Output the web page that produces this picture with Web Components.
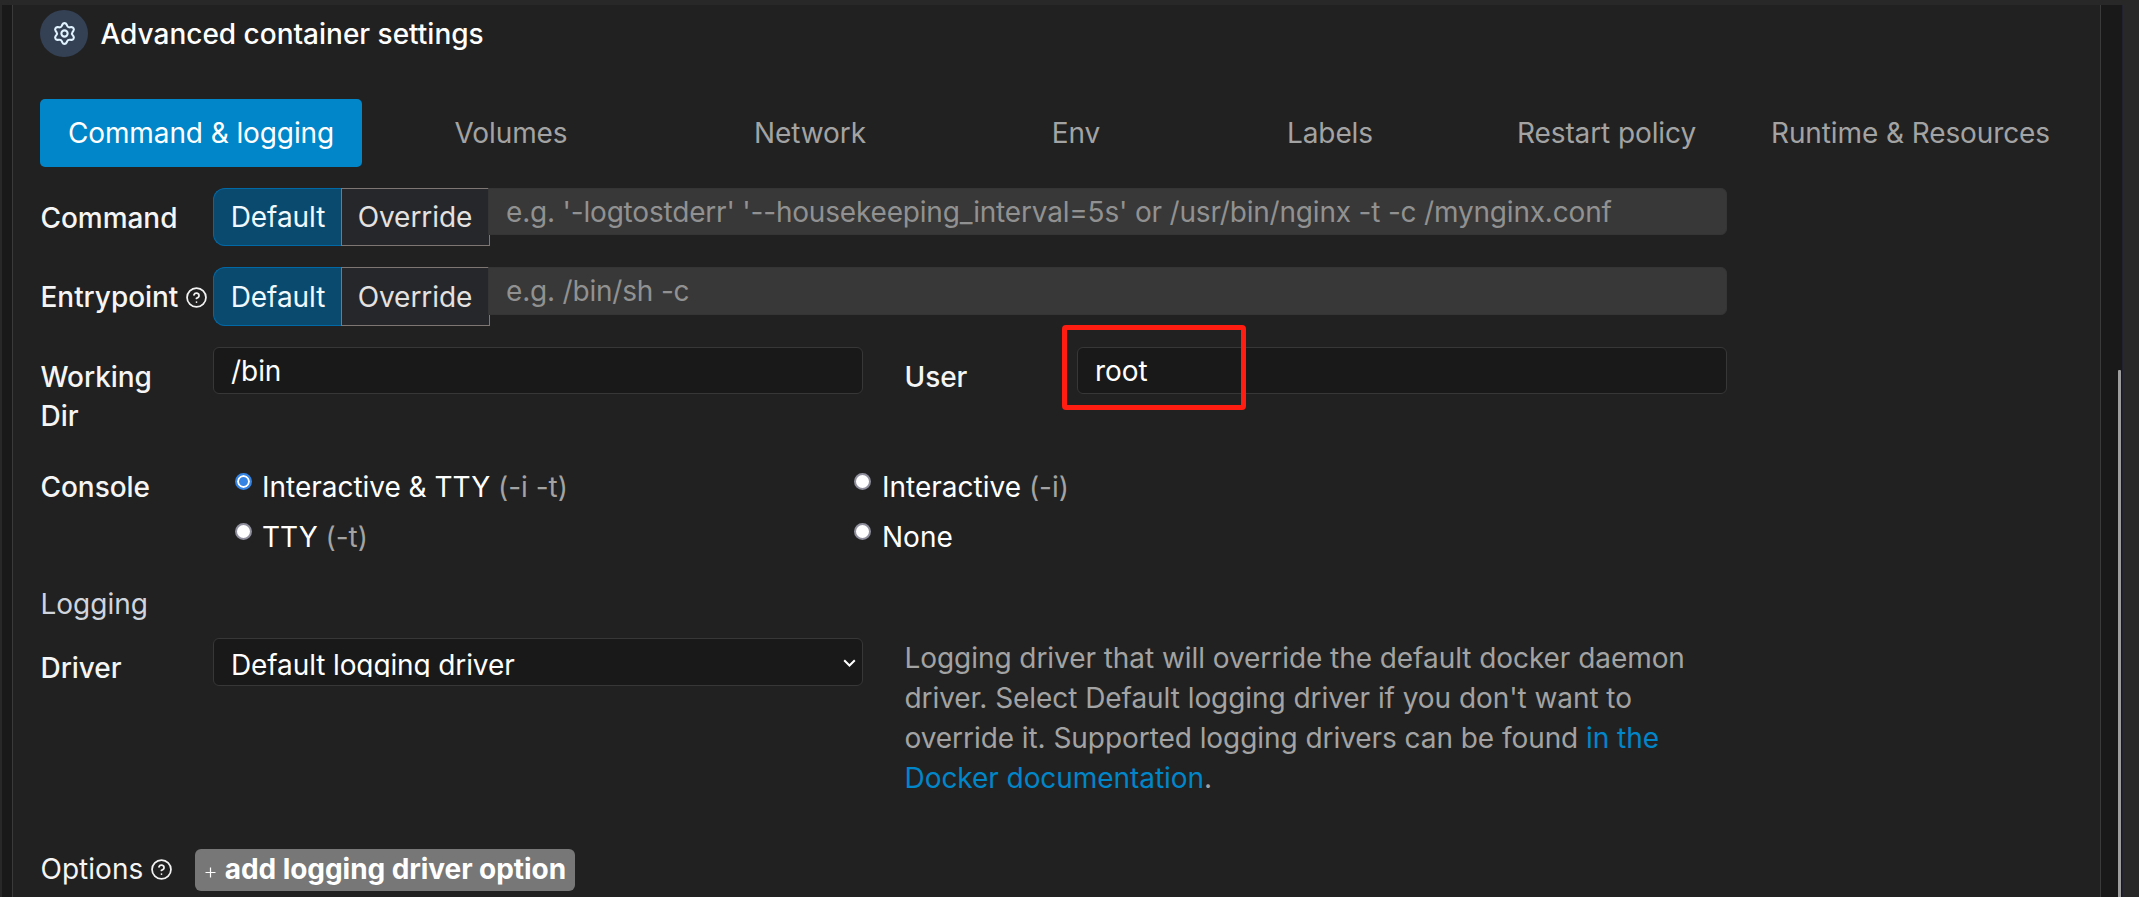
<!DOCTYPE html>
<html lang="en"><head><meta charset="utf-8"><title>Advanced container settings</title>
<style>
html,body{margin:0;height:100%;background:#282828;overflow:hidden}
body{font:400 28px/40px Inter,"Liberation Sans",sans-serif;color:#fff;letter-spacing:-.05px}
</style></head><body>
<settings-page></settings-page>
<script>
const define=(name,css,html)=>customElements.define(name,class extends HTMLElement{
  constructor(){super();this.attachShadow({mode:'open'}).innerHTML=`<style>*{box-sizing:border-box}${css}</style>${typeof html==='function'?html(this):html}`;}
});

define('help-icon',':host{display:block;width:21px;height:21px;flex:none}svg{display:block}',
`<svg width="21" height="21" viewBox="0 0 24 24" fill="none" stroke="#f2f2f2" stroke-width="2" stroke-linecap="round" stroke-linejoin="round"><circle cx="12" cy="12" r="10.8"/><path d="M9.1 9a3 3 0 0 1 5.8 1c0 2-3 3-3 3M12 17.2h.01"/></svg>`);

define('section-title',`:host{display:flex;align-items:flex-start;height:48px;gap:12.5px;font-weight:500;letter-spacing:-.01px}
.c{width:48px;height:47px;border-radius:50%;background:#344054;display:flex;align-items:center;justify-content:center}span{padding-top:4px}`,
`<div class="c"><svg width="25" height="25" viewBox="0 0 24 24" fill="none" stroke="#e0f2fe" stroke-width="2" stroke-linecap="round" stroke-linejoin="round"><circle cx="12" cy="12" r="3"/><path d="M9.395 19.371l.584 1.315a2.213 2.213 0 0 0 4.044 0l.584-1.315a2.426 2.426 0 0 1 2.47-1.423l1.431.152a2.212 2.212 0 0 0 2.022-3.502l-.847-1.164a2.43 2.43 0 0 1 0-2.857l.847-1.164a2.212 2.212 0 0 0-2.022-3.503l-1.431.153a2.43 2.43 0 0 1-2.47-1.43l-.588-1.314a2.213 2.213 0 0 0-4.044 0l-.58 1.315a2.43 2.43 0 0 1-2.47 1.429l-1.435-.153A2.212 2.212 0 0 0 3.468 9.413l.847 1.164a2.43 2.43 0 0 1 0 2.857l-.847 1.164a2.212 2.212 0 0 0 2.022 3.502l1.431-.152a2.43 2.43 0 0 1 2.474 1.423Z"/></svg></div><span><slot></slot></span>`);

define('nav-tab',`:host{display:flex;align-items:center;justify-content:center;height:68px;padding-bottom:1px;border-radius:5px;color:#a3a3a3;white-space:nowrap;box-sizing:border-box;letter-spacing:-.1px}
:host([active]){background:#0086c9;color:#fff}`,`<slot></slot>`);

define('nav-tabs',`:host{display:grid;grid-template-columns:322px 298px 300px 232px 276px 277px 331px}`,`<slot></slot>`);

define('form-label',`:host{display:flex;align-items:flex-start;gap:7.5px;padding-top:10px;padding-left:.5px;color:#f5f5f5;font-weight:500}help-icon{margin-top:10px}`,
el=>`<span><slot></slot></span>${el.hasAttribute('help')?'<help-icon></help-icon>':''}`);

define('form-row',`:host{display:grid;grid-template-columns:173px 1fr;height:var(--h,80px);align-items:start}`,`<slot name="label"></slot><slot></slot>`);

define('text-field',`:host{display:block;height:47px;border:1px solid #373737;border-radius:6px;background:#191919;padding:3px 17px;box-sizing:border-box;white-space:nowrap;overflow:hidden}`,`<slot></slot>`);

define('override-field',`:host{display:flex;width:1514px;align-items:flex-start}
.b{height:var(--bh,59px);padding:var(--bp,9px) 0;text-align:center;border:1px solid #7d7672;background:#26272b;color:#e4e2e0}
.d{width:128px;border:1px solid #0069a6;border-right:0;border-radius:12px 0 0 12px;background:#0b4a6f;color:#f0f9ff;padding-left:1px}
.o{width:149px;padding-right:1px}
.i{flex:1;height:var(--ih,48px);margin-left:-2px;background:#383838;color:#919191;border-radius:0 6px 6px 0;border:1px solid #353535;padding:3px 17px;white-space:nowrap;position:relative;letter-spacing:-.19px}`,
`<div class="b d">Default</div><div class="b o">Override</div><div class="i"><slot></slot></div>`);

define('radio-option',`:host{display:flex;height:50px;align-items:flex-start;color:#fff}
i{width:17px;height:17px;border-radius:50%;background:#fff;border:2px solid #8f8f9d;margin:6px var(--gap,11px) 0 0}
:host([checked]) i{background:#3584e4;border-color:#3584e4;box-shadow:inset 0 0 0 2px #fff}
::slotted(span){color:#a3a3a3}`,`<i></i><div><slot></slot></div>`);

define('select-field',`:host{display:flex;justify-content:space-between;align-items:flex-start;height:48px;border:1px solid #373737;border-radius:6px;background:#191919;padding:6px 6px 0 17px;box-sizing:border-box;letter-spacing:-.12px}
div{height:32px;overflow:hidden}svg{margin-top:13.5px}`,
`<div><slot></slot></div><svg width="13" height="9" viewBox="0 0 13 9" fill="none" stroke="#fff" stroke-width="2"><path d="M1.2 1.2l5.3 5.3 5.3-5.3"/></svg>`);

define('add-button',`:host{display:flex;width:380px;height:42px;border-radius:6px;background:#777;font-weight:700;padding-left:10px;gap:9px;box-sizing:border-box;white-space:nowrap;letter-spacing:-.06px}
svg{margin-top:18px;flex:none}`,
`<svg width="11" height="11" viewBox="0 0 11 11" stroke="#fff" stroke-width="1.2"><path d="M5.5 .5v10M.5 5.5h10"/></svg><span><slot></slot></span>`);

define('highlight-frame',`:host{position:absolute;left:-15px;top:-22px;width:184px;height:85px;box-sizing:border-box;border:5px solid #ff1c10;border-radius:4px}`,``);

define('settings-page',`:host{display:flex;height:897px;width:2139px;border-top:5px solid #282828;border-left:2px solid #282828;box-sizing:border-box;overflow:hidden}
.gutter{width:10px;background:#191919}
.panel{width:2089px;background:#212121;border-left:1px solid #3a3a3a;border-right:1px solid #3a3a3a;padding:5px 23px 0 27px;overflow:hidden}
.scroll{width:21px;background:#191919;padding-top:365px;padding-left:17px;padding-right:1px}
.thumb{height:527px;background:#9d9d9d;border-radius:1px 1px 0 0}
.edge{width:1px;background:#20222e}
nav-tabs{margin-top:41px;margin-bottom:21px}
.two{display:grid;grid-template-columns:650px 171px 650px}
.two form-label{padding-left:41.5px}
.wrap{line-height:39.4px;padding-top:11px}
.user{position:relative;margin-left:43px;width:650px}
.radios{display:grid;grid-template-columns:619px 1fr;padding-left:22px;padding-top:10px;width:1300px}
.radios .a{--gap:10px;letter-spacing:-.02px}.radios .b{letter-spacing:0}
.log{height:54px;padding-left:.5px;color:#d0d5dd;letter-spacing:0}
.drv{display:grid;grid-template-columns:650px 790px;column-gap:41.5px}
p{margin:0;color:#a3a3a3;white-space:nowrap;letter-spacing:-.06px}a{color:#0086c9;text-decoration:none}
.opt{display:flex;gap:23px}.opt form-label{padding-top:0;font-weight:400;letter-spacing:.02px}`,
`<div class="gutter"></div><main class="panel">
<section-title>Advanced container settings</section-title>
<nav-tabs><nav-tab active>Command &amp; logging</nav-tab><nav-tab>Volumes</nav-tab><nav-tab>Network</nav-tab><nav-tab>Env</nav-tab><nav-tab>Labels</nav-tab><nav-tab>Restart policy</nav-tab><nav-tab>Runtime &amp; Resources</nav-tab></nav-tabs>
<form-row style="--h:79px;--bh:58px;--bp:8px;--ih:47px"><form-label slot="label">Command</form-label><override-field>e.g. '-logtostderr' '--housekeeping_interval=5s' or /usr/bin/nginx -t -c /mynginx.conf</override-field></form-row>
<form-row><form-label slot="label" help>Entrypoint</form-label><override-field>e.g. /bin/sh -c</override-field></form-row>
<form-row style="--h:110px"><form-label slot="label" class="wrap">Working<br>Dir</form-label><div class="two"><text-field>/bin</text-field><form-label>User</form-label><div class="user"><text-field>root</text-field><highlight-frame></highlight-frame></div></div></form-row>
<form-row style="--h:127px"><form-label slot="label">Console</form-label><div class="radios"><radio-option class="a" checked>Interactive &amp; TTY <span>(-i -t)</span></radio-option><radio-option class="b">Interactive <span>(-i)</span></radio-option><radio-option class="a">TTY <span>(-t)</span></radio-option><radio-option class="b">None</radio-option></div></form-row>
<div class="log">Logging</div>
<form-row style="--h:211px"><form-label slot="label">Driver</form-label><div class="drv"><select-field>Default logging driver</select-field><p>Logging driver that will override the default docker daemon<br>driver. Select Default logging driver if you don't want to<br>override it. Supported logging drivers can be found <a>in the<br>Docker documentation</a>.</p></div></form-row>
<div class="opt"><form-label help>Options</form-label><add-button>add logging driver option</add-button></div>
</main><div class="scroll"><div class="thumb"></div></div><div class="edge"></div>`);
</script></body></html>
